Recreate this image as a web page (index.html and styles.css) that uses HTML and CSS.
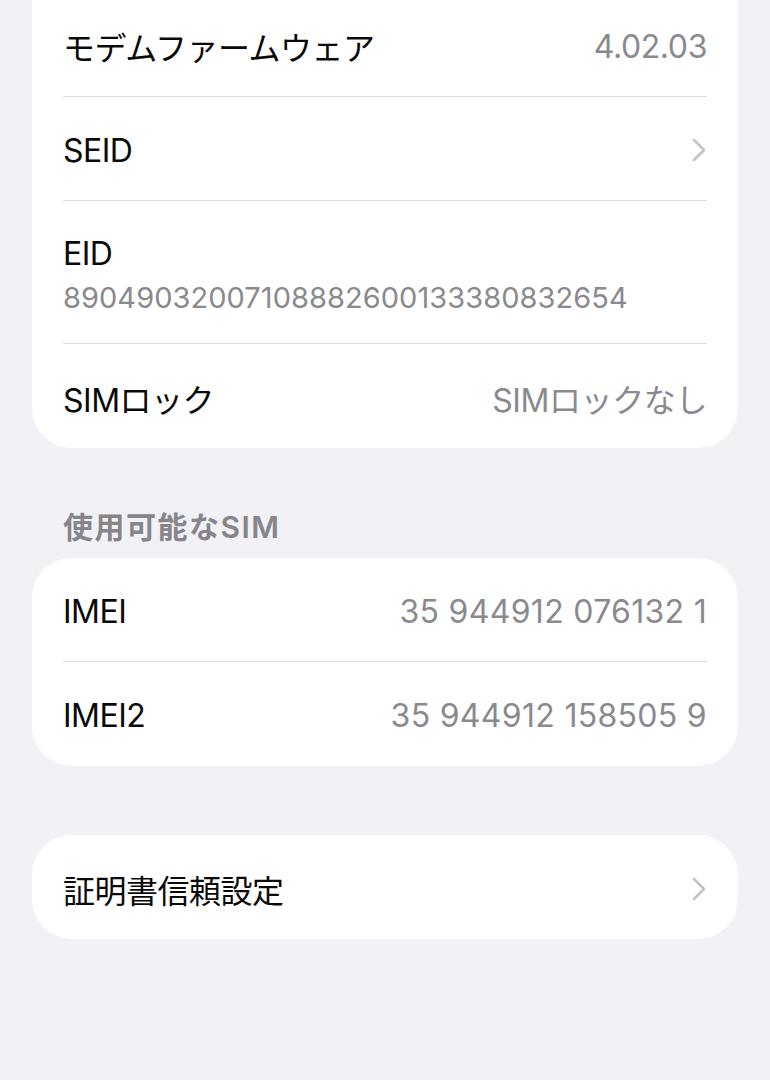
FILE: index.html
```html
<!DOCTYPE html>
<html lang="ja">
<head>
  <meta charset="UTF-8" />
  <meta name="viewport" content="width=device-width, initial-scale=1.0"/>
  <title>情報</title>
  <link rel="stylesheet" href="styles.css">
</head>
<body>
  <div class="screen">

    <!-- 上のグループ (上端は画面外) -->
    <div class="card card-top">
      <div class="row">
        <span class="label">モデムファームウェア</span>
        <span class="value">4.02.03</span>
      </div>
      <div class="row">
        <span class="label">SEID</span>
        <svg class="chevron" viewBox="0 0 14 24" width="14" height="24">
          <path d="M2 2 L12 12 L2 22" />
        </svg>
      </div>
      <div class="row row-stack">
        <span class="label">EID</span>
        <span class="sub">89049032007108882600133380832654</span>
      </div>
      <div class="row">
        <span class="label">SIMロック</span>
        <span class="value">SIMロックなし</span>
      </div>
    </div>

    <div class="section-title">使用可能なSIM</div>

    <div class="card">
      <div class="row">
        <span class="label">IMEI</span>
        <span class="value num">35 944912 076132 1</span>
      </div>
      <div class="row">
        <span class="label">IMEI2</span>
        <span class="value num">35 944912 158505 9</span>
      </div>
    </div>

    <div class="card card-gap">
      <div class="row">
        <span class="label">証明書信頼設定</span>
        <svg class="chevron" viewBox="0 0 14 24" width="14" height="24">
          <path d="M2 2 L12 12 L2 22" />
        </svg>
      </div>
    </div>

  </div>
</body>
</html>
```

FILE: styles.css
```css
* {
  box-sizing: border-box;
}

html,
body {
  margin: 0;
  height: 100%;
  background: #f2f1f6;
}

body {
  font-family: 'Inter', 'Noto Sans CJK JP', sans-serif;
  color: #0a0a0a;
  overflow: hidden;
}

.screen {
  padding: 0 32px;
}

.card {
  background: #fff;
  border-radius: 40px;
  padding: 0 31px;
}

/* the first group starts above the top of the screen */
.card-top {
  margin-top: -60px;
  padding-top: 53px;
}

.card-gap {
  margin-top: 69px;
}

.row {
  display: flex;
  align-items: center;
  justify-content: space-between;
  height: 104px;
  padding-top: 3px;
  border-bottom: 1px solid #dedee2;
}

.row:last-child {
  border-bottom: none;
}

.label {
  font-size: 32px;
  letter-spacing: -0.5px;
}

.value {
  font-size: 32px;
  letter-spacing: -0.4px;
  color: #8a8a8e;
}

.value.num {
  letter-spacing: 0.3px;
}

.row-stack {
  flex-direction: column;
  align-items: flex-start;
  justify-content: flex-start;
  height: 143px;
  padding-top: 33px;
}

.row-stack .label {
  line-height: 40px;
}

.sub {
  margin-top: 4px;
  line-height: 40px;
  font-size: 29px;
  letter-spacing: 0.05px;
  color: #8a8a8e;
}

.chevron {
  margin-right: 1px;
  fill: none;
  stroke: #c4c4c7;
  stroke-width: 2.6;
  stroke-linecap: round;
  stroke-linejoin: round;
}

.section-title {
  margin: 61px 0 13px 31px;
  line-height: 36px;
  font-size: 30px;
  font-weight: 600;
  letter-spacing: 1.5px;
  color: #85858a;
}
```
